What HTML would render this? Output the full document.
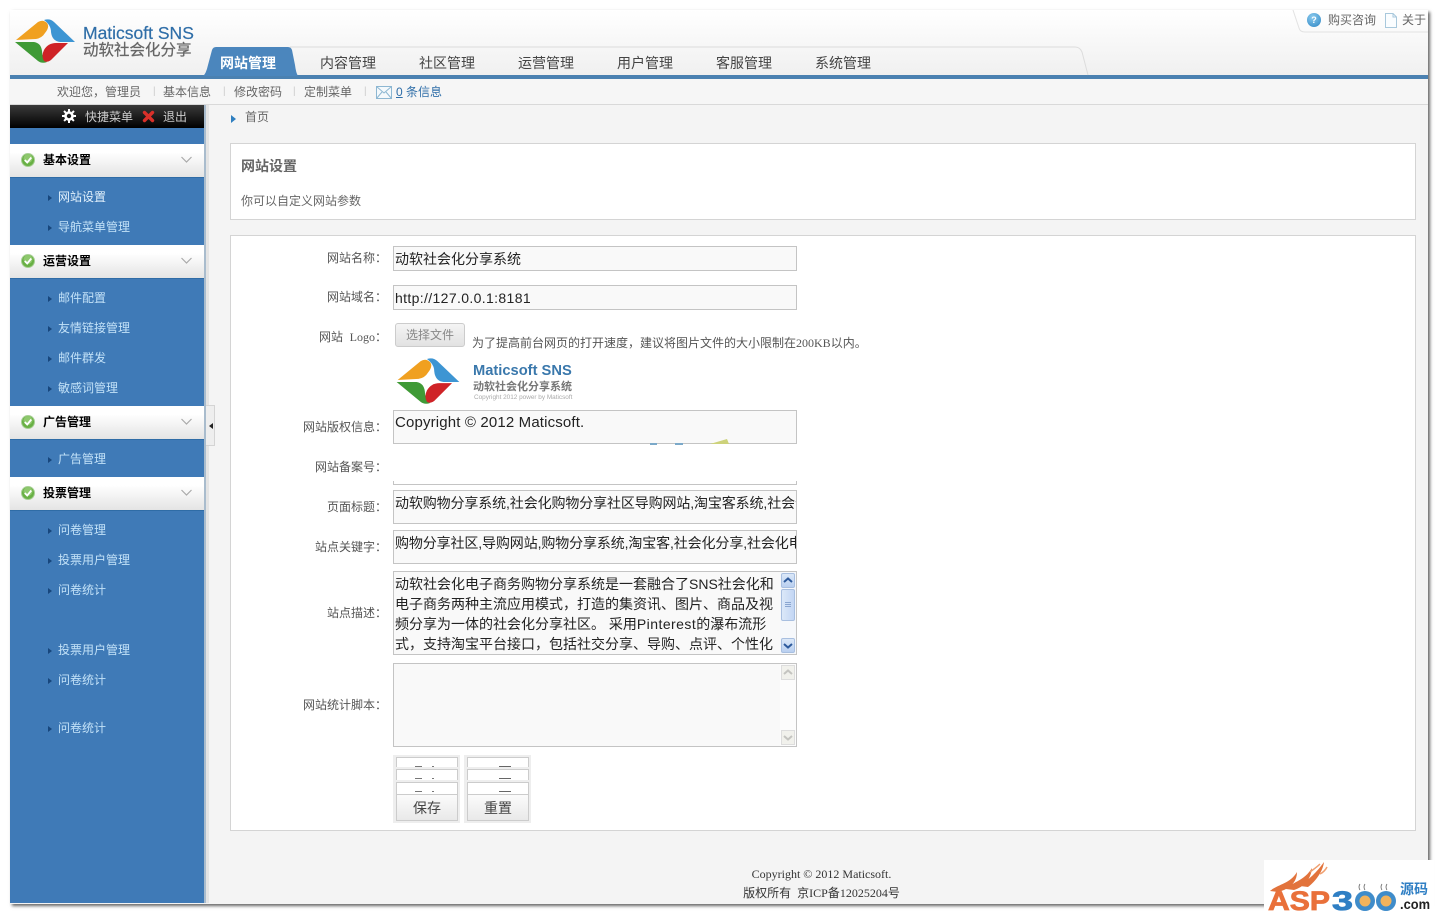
<!DOCTYPE html>
<html lang="zh"><head><meta charset="utf-8"><title>网站设置</title>
<style>
html,body{margin:0;padding:0;background:#fff}
body{width:1439px;height:915px;position:relative;overflow:hidden;font:12px "Liberation Sans","Noto Sans CJK SC",sans-serif;color:#555}
.a,.a *{box-sizing:border-box}
.a{position:absolute;white-space:nowrap}
.t{position:absolute;white-space:nowrap;line-height:16px;font-size:12px}
.c{font-family:"Noto Sans CJK TC",sans-serif}
.lb{position:absolute;right:1052px;text-align:right;white-space:nowrap;line-height:16px;color:#555;font-size:12px;font-family:"Liberation Sans","Noto Sans CJK TC",sans-serif}
.in{position:absolute;left:393px;width:404px;background:#f9f9f9;border:1px solid #c4c4c4;color:#222;font-size:14px;padding-left:1px;overflow:hidden;white-space:nowrap;box-sizing:border-box}
.nav{position:absolute;top:54px;font-size:14px;color:#444;line-height:18px}
.gh{position:absolute;left:10px;width:194px;height:33px;background:linear-gradient(#fff 25%,#e4e4e4);border-bottom:1px solid #2f6ca6}
.gh b{position:absolute;left:33px;top:8px;font-size:12px;line-height:17px;color:#000}
.gh svg{position:absolute}
.it{position:absolute;left:58px;color:#c3e2f8;font-size:12px;line-height:16px}
.it:before{content:"";position:absolute;left:-10px;top:6px;border-left:4px solid #17467c;border-top:3px solid transparent;border-bottom:3px solid transparent}
.sb{position:absolute;left:780px;width:16px;background:#f6f8fb}
</style></head><body>

<svg width="0" height="0" style="position:absolute"><defs>
<symbol id="ok" viewBox="0 0 14 14"><circle cx="7" cy="7" r="6.500" fill="#68b044" stroke="#a6cf93"/><circle cx="7" cy="5.500" r="4.500" fill="#a8d888" opacity=".6"/><path d="M3.800 7L6.200 9.500L10.300 4.500" fill="none" stroke="#fff" stroke-width="1.800"/></symbol>
<symbol id="chev" viewBox="0 0 11 8"><path d="M.5 1L5.500 6L10.500 1" fill="none" stroke="#aaa" stroke-width="1.200"/></symbol>
<symbol id="mark" viewBox="0 0 62 44">
<path d="M2 21L24 3Q29 0 33 4Q36 8 31 14Q28 19 22 20Z" fill="#f0a020"/>
<path d="M30 1Q36-1 40 3L61 23L46 23Q38 22 37 13Q37 6 30 1Z" fill="#3d95d3"/>
<path d="M1 23L20 23Q27 24 28 32Q28 39 33 43Q28 45 24 42Z" fill="#3f9a36"/>
<path d="M54 24L37 41Q33 44 30 42Q27 37 30 31Q34 24 42 24Z" fill="#cf2327"/>
</symbol>
</defs></svg>

<!-- window -->
<div class="a" style="left:10px;top:10px;width:1418px;height:894px;background:#f4f4f4;box-shadow:2px 2px 3px #666"></div>

<!-- header -->
<div class="a" style="left:10px;top:10px;width:1418px;height:65px;background:linear-gradient(#fff,#f0f0f0)"></div>
<div class="a" style="left:10px;top:75px;width:1418px;height:4px;background:#4b81b1"></div>
<div class="a" style="left:10px;top:79px;width:1418px;height:26px;background:#f6f6f6;border-bottom:1px solid #d9d9d9"></div>

<!-- logo -->
<svg class="a" style="left:14px;top:19px" width="62" height="44"><use href="#mark"/></svg>
<div class="t" style="left:83px;top:23px;font-size:17.500px;line-height:20px;color:#2f6ea8;-webkit-text-stroke:.2px #2f6ea8">Maticsoft SNS</div>
<div class="t" style="left:83px;top:41px;font-size:15.500px;line-height:20px;color:#666;-webkit-text-stroke:.25px #666">动软社会化分享</div>

<!-- nav tray -->
<svg class="a" style="left:290px;top:46px" width="800" height="30"><path d="M0 1H785Q790 1 792 6L798 29" fill="none" stroke="#dcdcdc"/></svg>
<!-- active tab -->
<svg class="a" style="left:203px;top:47px" width="95" height="29"><path d="M0 29Q3 27 5 18L9 3Q10 0 13 0H85Q88 0 89 3L92 18Q93 26 95 29Z" fill="#4b86bd"/></svg>
<div class="nav" style="left:220px;color:#fff;font-weight:bold">网站管理</div>
<div class="nav" style="left:320px">内容管理</div>
<div class="nav" style="left:419px">社区管理</div>
<div class="nav" style="left:518px">运营管理</div>
<div class="nav" style="left:617px">用户管理</div>
<div class="nav" style="left:716px">客服管理</div>
<div class="nav" style="left:815px">系统管理</div>

<!-- top right -->
<svg class="a" style="left:1285px;top:10px" width="143" height="24"><path d="M8 0L14 18Q15 22 20 22H143" fill="none" stroke="#e2e2e2"/></svg>
<div class="a" style="left:1307px;top:13px;width:14px;height:14px;border-radius:50%;background:radial-gradient(circle at 40% 30%,#8ccbee,#2c85c4);color:#fff;font-size:9px;line-height:14px;text-align:center;font-weight:bold">?</div>
<div class="t" style="left:1328px;top:12px;color:#666">购买咨询</div>
<svg class="a" style="left:1385px;top:13px" width="12" height="15"><path d="M.5.5H8L11.500 4V14.500H.5Z" fill="#fafdff" stroke="#a8c8dc"/><path d="M8 .5V4H11.500" fill="none" stroke="#a8c8dc"/></svg>
<div class="t" style="left:1402px;top:12px;color:#666">关于</div>

<!-- sub bar -->
<div class="t" style="left:57px;top:84px;color:#666">欢迎您<span class="c">，</span>管理员</div>
<div class="t" style="left:153px;top:84px;color:#ccc;font-size:10px">|</div>
<div class="t" style="left:163px;top:84px;color:#666">基本信息</div>
<div class="t" style="left:223px;top:84px;color:#ccc;font-size:10px">|</div>
<div class="t" style="left:234px;top:84px;color:#666">修改密码</div>
<div class="t" style="left:293px;top:84px;color:#ccc;font-size:10px">|</div>
<div class="t" style="left:304px;top:84px;color:#666">定制菜单</div>
<div class="t" style="left:364px;top:84px;color:#ccc;font-size:10px">|</div>
<svg class="a" style="left:376px;top:86px" width="16" height="13"><rect x=".5" y=".5" width="15" height="12" fill="#f4f9fc" stroke="#8db7d2"/><path d="M.5 .5L8 7L15.500 .5M.5 12.500L6 6M15.500 12.500L10 6" fill="none" stroke="#8db7d2"/></svg>
<div class="t" style="left:396px;top:84px;color:#2f6ea8"><span style="text-decoration:underline">0</span> 条信息</div>

<!-- sidebar -->
<div class="a" style="left:10px;top:105px;width:194px;height:798px;background:#3f7ab7"></div>
<div class="a" style="left:204px;top:105px;width:2px;height:798px;background:#a9bccd"></div>
<div class="a" style="left:206px;top:105px;width:3px;height:798px;background:#e4e4e4"></div>
<div class="a" style="left:10px;top:105px;width:194px;height:23px;background:linear-gradient(#3a3a3a,#000)"></div>
<svg class="a" style="left:62px;top:109px" width="14" height="14" viewBox="0 0 14 14"><circle cx="7" cy="7" r="3.500" fill="none" stroke="#fff" stroke-width="2.600"/><path d="M7 0V14M0 7H14M2 2L12 12M12 2L2 12" stroke="#fff" stroke-width="2" stroke-dasharray="2.500 9"/></svg>
<div class="t" style="left:85px;top:109px;color:#ccc">快捷菜单</div>
<svg class="a" style="left:142px;top:110px" width="13" height="13"><path d="M2.500 2.500L10.500 10.500M10.500 2.500L2.500 10.500" stroke="#d9302a" stroke-width="3.400" stroke-linecap="round"/></svg>
<div class="t" style="left:163px;top:109px;color:#ccc">退出</div>

<div class="gh" style="top:144px"><svg style="left:11px;top:9px" width="14" height="14"><use href="#ok"/></svg><b>基本设置</b><svg style="left:171px;top:12px" width="11" height="8"><use href="#chev"/></svg></div>
<div class="it" style="top:189px;color:#e2f1fc">网站设置</div>
<div class="it" style="top:219px">导航菜单管理</div>

<div class="gh" style="top:245px"><svg style="left:11px;top:9px" width="14" height="14"><use href="#ok"/></svg><b>运营设置</b><svg style="left:171px;top:12px" width="11" height="8"><use href="#chev"/></svg></div>
<div class="it" style="top:290px">邮件配置</div>
<div class="it" style="top:320px">友情链接管理</div>
<div class="it" style="top:350px">邮件群发</div>
<div class="it" style="top:380px">敏感词管理</div>

<div class="gh" style="top:406px"><svg style="left:11px;top:9px" width="14" height="14"><use href="#ok"/></svg><b>广告管理</b><svg style="left:171px;top:12px" width="11" height="8"><use href="#chev"/></svg></div>
<div class="it" style="top:451px">广告管理</div>

<div class="gh" style="top:477px"><svg style="left:11px;top:9px" width="14" height="14"><use href="#ok"/></svg><b>投票管理</b><svg style="left:171px;top:12px" width="11" height="8"><use href="#chev"/></svg></div>
<div class="it" style="top:522px">问卷管理</div>
<div class="it" style="top:552px">投票用户管理</div>
<div class="it" style="top:582px">问卷统计</div>
<div class="it" style="top:642px">投票用户管理</div>
<div class="it" style="top:672px">问卷统计</div>
<div class="it" style="top:720px">问卷统计</div>

<!-- collapse handle -->
<div class="a" style="left:206px;top:405px;width:9px;height:41px;background:#eee;border:1px solid #d4d4d4;border-left:0"></div>
<div class="a" style="left:209px;top:423px;border-right:4px solid #222;border-top:3px solid transparent;border-bottom:3px solid transparent"></div>

<!-- breadcrumb -->
<div class="a" style="left:231px;top:115px;border-left:5px solid #2f7fc0;border-top:4px solid transparent;border-bottom:4px solid transparent"></div>
<div class="t" style="left:245px;top:109px;color:#666">首页</div>

<!-- title card -->
<div class="a" style="left:230px;top:143px;width:1186px;height:77px;background:#fff;border:1px solid #d4d4d4"></div>
<div class="t" style="left:241px;top:157px;font-size:14px;line-height:18px;font-weight:bold;color:#666">网站设置</div>
<div class="t" style="left:241px;top:193px;color:#666">你可以自定义网站参数</div>

<!-- form card -->
<div class="a" style="left:230px;top:235px;width:1186px;height:596px;background:#fff;border:1px solid #d4d4d4"></div>

<div class="lb" style="top:250px">网站名称：</div>
<div class="in" style="top:246px;height:25px;line-height:24px">动软社会化分享系统</div>
<div class="lb" style="top:289px">网站域名：</div>
<div class="in" style="top:285px;height:25px;line-height:24px;letter-spacing:.36px">http://127.0.0.1:8181</div>

<div class="lb" style="top:329px">网站&nbsp; <span style="font-family:'Liberation Serif',serif">Logo</span>：</div>
<div class="a" style="left:395px;top:323px;width:70px;height:24px;background:linear-gradient(#f4f4f4,#e2e2e2);border:1px solid #ccc;border-radius:3px;color:#888;font-size:12px;line-height:23px;text-align:center">选择文件</div>
<div class="t" style="left:472px;top:335px;color:#555">为了提高前台网页的打开速度，建议将图片文件的大小限制在<span style="font-family:'Liberation Serif',serif">200KB</span>以内。</div>

<svg class="a" style="left:395px;top:358px" width="66" height="46"><use href="#mark" width="66" height="46"/></svg>
<div class="t" style="left:473px;top:362px;font-size:14.700px;line-height:19px;font-weight:bold;color:#3a78ac">Maticsoft SNS</div>
<div class="t" style="left:473px;top:380px;font-size:11px;line-height:15px;font-weight:bold;color:#777">动软社会化分享系统</div>
<div class="t" style="left:474px;top:394px;font-size:6.400px;line-height:8px;color:#aaa">Copyright 2012 power by Maticsoft</div>

<div class="lb" style="top:419px">网站版权信息：</div>
<div class="in" style="top:410px;height:34px;line-height:24px;font-size:15px;letter-spacing:.15px">Copyright © 2012 Maticsoft.</div>
<svg class="a" style="left:645px;top:437px" width="90" height="8"><path d="M65 7L82 2L84 7Z" fill="#cdd27a"/><path d="M5 7H12M30 7H38" stroke="#7ba9c9" stroke-width="2"/></svg>

<div class="lb" style="top:459px">网站备案号：</div>
<div class="a" style="left:393px;top:481px;width:404px;height:4px;border:1px solid #c4c4c4;border-top:0;background:#fff"></div>

<div class="lb" style="top:499px">页面标题：</div>
<div class="in" style="top:490px;height:34px;line-height:25px;letter-spacing:-.12px">动软购物分享系统,社会化购物分享社区导购网站,淘宝客系统,社会化电子商务</div>
<div class="lb" style="top:539px">站点关键字：</div>
<div class="in" style="top:530px;height:34px;line-height:24px;letter-spacing:-.12px">购物分享社区,导购网站,购物分享系统,淘宝客,社会化分享,社会化电子商务</div>

<div class="lb" style="top:605px">站点描述：</div>
<div class="in" style="top:571px;height:84px;line-height:20.100px;padding-top:2px;white-space:normal">
动软社会化电子商务购物分享系统是一套融合了SNS社会化和<br>电子商务两种主流应用模式<span class="c">，</span>打造的集资讯、图片、商品及视<br>频分享为一体的社会化分享社区。 采用<span style="letter-spacing:.45px">Pinterest</span>的瀑布流形<br>式<span class="c">，</span>支持淘宝平台接口<span class="c">，</span>包括社交分享、导购、点评、个性化</div>
<div class="sb" style="top:572px;height:82px"></div>
<div class="a" style="left:781px;top:573px;width:14px;height:15px;background:linear-gradient(#dbe8f8,#b9cff0);border:1px solid #a8bfe0;border-radius:2px"></div>
<svg class="a" style="left:783px;top:577px" width="10" height="7"><path d="M1 5L5 1.500L9 5" fill="none" stroke="#2d5a9c" stroke-width="2"/></svg>
<div class="a" style="left:781px;top:589px;width:14px;height:32px;background:linear-gradient(90deg,#dbe8f8,#c3d6f4);border:1px solid #a8bfe0;border-radius:2px"></div>
<div class="a" style="left:785px;top:602px;width:6px;height:6px;background:repeating-linear-gradient(#8aa6d0 0 1px,transparent 1px 2px)"></div>
<div class="a" style="left:781px;top:638px;width:14px;height:15px;background:linear-gradient(#dbe8f8,#b9cff0);border:1px solid #a8bfe0;border-radius:2px"></div>
<svg class="a" style="left:783px;top:642px" width="10" height="7"><path d="M1 2L5 5.500L9 2" fill="none" stroke="#2d5a9c" stroke-width="2"/></svg>

<div class="lb" style="top:697px">网站统计脚本：</div>
<div class="in" style="top:663px;height:84px"></div>
<div class="sb" style="top:664px;height:82px;background:#fcfcfc"></div>
<div class="a" style="left:781px;top:665px;width:14px;height:15px;background:#f1f1ec;border:1px solid #ddd"></div>
<svg class="a" style="left:783px;top:669px" width="10" height="7"><path d="M1 5L5 1.500L9 5" fill="none" stroke="#c4c4c0" stroke-width="2"/></svg>
<div class="a" style="left:781px;top:730px;width:14px;height:15px;background:#f1f1ec;border:1px solid #ddd"></div>
<svg class="a" style="left:783px;top:734px" width="10" height="7"><path d="M1 2L5 5.500L9 2" fill="none" stroke="#c4c4c0" stroke-width="2"/></svg>

<!-- buttons -->
<div class="a" style="left:393px;top:755px;width:67px;height:68px;background:#eee"></div>
<div class="a" style="left:464px;top:755px;width:67px;height:68px;background:#eee"></div>
<div class="a" style="left:396px;top:757px;width:62px;height:10px;background:#fff;border:1px solid #ccc;border-bottom:0"></div>
<div class="a" style="left:467px;top:757px;width:62px;height:10px;background:#fff;border:1px solid #ccc;border-bottom:0"></div>
<div class="a" style="left:396px;top:769px;width:62px;height:11px;background:#fff;border:1px solid #ccc;border-bottom:0"></div>
<div class="a" style="left:467px;top:769px;width:62px;height:11px;background:#fff;border:1px solid #ccc;border-bottom:0"></div>
<div class="a" style="left:396px;top:782px;width:62px;height:12px;background:#fff;border:1px solid #ccc;border-bottom:0"></div>
<div class="a" style="left:467px;top:782px;width:62px;height:12px;background:#fff;border:1px solid #ccc;border-bottom:0"></div>
<div class="a" style="left:415px;top:766px;width:7px;height:1px;background:#777"></div><div class="a" style="left:432px;top:766px;width:2px;height:1px;background:#777"></div>
<div class="a" style="left:415px;top:778px;width:7px;height:1px;background:#777"></div><div class="a" style="left:432px;top:778px;width:2px;height:1px;background:#777"></div>
<div class="a" style="left:415px;top:791px;width:7px;height:1px;background:#777"></div><div class="a" style="left:432px;top:791px;width:2px;height:1px;background:#777"></div>
<div class="a" style="left:499px;top:766px;width:12px;height:1px;background:#666"></div>
<div class="a" style="left:499px;top:778px;width:12px;height:1px;background:#666"></div>
<div class="a" style="left:499px;top:791px;width:12px;height:1px;background:#666"></div>
<div class="a" style="left:396px;top:794px;width:62px;height:27px;background:linear-gradient(#fbfbfb,#e9e9e9);border:1px solid #ccc;color:#444;font-size:14px;line-height:27px;text-align:center">保存</div>
<div class="a" style="left:467px;top:794px;width:62px;height:27px;background:linear-gradient(#fbfbfb,#e9e9e9);border:1px solid #ccc;color:#444;font-size:14px;line-height:27px;text-align:center">重置</div>

<!-- footer -->
<div class="t" style="left:229px;width:1185px;text-align:center;top:866px;font-family:'Liberation Serif','Noto Sans CJK SC',serif;color:#333">Copyright © 2012 Maticsoft.</div>
<div class="t" style="left:229px;width:1185px;text-align:center;top:885px;font-family:'Liberation Serif','Noto Sans CJK SC',serif;color:#333">版权所有&nbsp; 京ICP备12025204号</div>

<!-- watermark -->
<div class="a" style="left:1264px;top:860px;width:170px;height:55px;background:#fff"></div>
<svg class="a" style="left:1264px;top:860px" width="170" height="55">
<path d="M6 31C14 24 26 24 33 12C33 22 26 29 14 32ZM22 29C30 21 40 21 48 8C47 19 40 27 30 30ZM36 26C44 19 50 16 60 2C59 11 52 21 44 27Z" fill="#e2733c"/>
<path d="M46 12C50 9 53 7 56 4M56 14C60 12 62 9 63 7" fill="none" stroke="#f0a070" stroke-width="1.500"/>
<text x="4" y="50" font-family="Liberation Sans" font-weight="bold" font-size="27" fill="#e9703a" textLength="62" lengthAdjust="spacingAndGlyphs" stroke="#e9703a" stroke-width=".8">ASP</text>
<text x="68" y="50" font-family="Liberation Sans" font-weight="bold" font-size="27" fill="#2f7fc4" textLength="21" lengthAdjust="spacingAndGlyphs" stroke="#2f7fc4" stroke-width=".8">3</text>
<circle cx="101" cy="41" r="10" fill="#3f8cca"/><circle cx="101" cy="41" r="5.500" fill="#f2b35c"/>
<circle cx="122" cy="41" r="10" fill="#3f8cca"/><circle cx="122" cy="41" r="5.500" fill="#f2b35c"/>
<path d="M96 30Q94 27 96 24M101 30Q99 27 101 24M118 30Q116 27 118 24M123 30Q121 27 123 24" fill="none" stroke="#666" stroke-width=".8"/>
<text x="136" y="34" font-family="Noto Sans CJK SC" font-weight="bold" font-size="14" fill="#2f7fc4">源码</text>
<text x="136" y="49" font-family="Liberation Sans" font-weight="bold" font-size="14" fill="#222" textLength="30" lengthAdjust="spacingAndGlyphs">.com</text>
</svg>
</body></html>
